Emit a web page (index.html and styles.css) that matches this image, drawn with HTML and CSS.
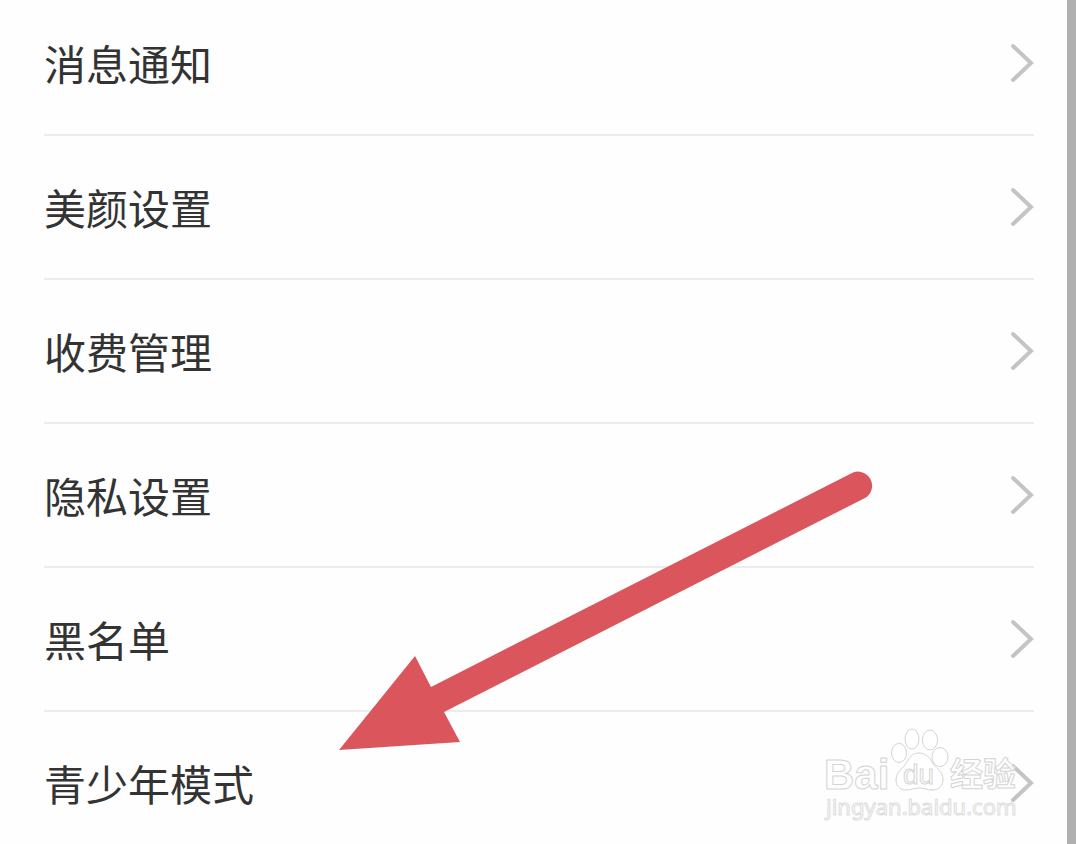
FILE: index.html
```html
<!DOCTYPE html>
<html lang="zh-CN">
<head>
    <meta charset="UTF-8">
    <meta name="viewport" content="width=device-width, initial-scale=1.0">
    <title>设置</title>
    <link rel="stylesheet" href="styles.css">
</head>
<body>
    <main class="page">
        <nav class="settings">
            <a class="row" href="#notice">消息通知
                <svg class="chevron" viewBox="0 0 24 40"><path d="M3 3L21 20L3 37"/></svg>
            </a>
            <a class="row" href="#beauty">美颜设置
                <svg class="chevron" viewBox="0 0 24 40"><path d="M3 3L21 20L3 37"/></svg>
            </a>
            <a class="row" href="#charge">收费管理
                <svg class="chevron" viewBox="0 0 24 40"><path d="M3 3L21 20L3 37"/></svg>
            </a>
            <a class="row" href="#privacy">隐私设置
                <svg class="chevron" viewBox="0 0 24 40"><path d="M3 3L21 20L3 37"/></svg>
            </a>
            <a class="row" href="#blacklist">黑名单
                <svg class="chevron" viewBox="0 0 24 40"><path d="M3 3L21 20L3 37"/></svg>
            </a>
            <a class="row" href="#teen">青少年模式
                <svg class="chevron" viewBox="0 0 24 40"><path d="M3 3L21 20L3 37"/></svg>
            </a>
        </nav>

        <!-- Red arrow pointing at the last row -->
        <svg class="arrow" viewBox="0 0 534 280">
            <path d="M0 279L76 185L92 216L512 2.500A14 14 0 0 1 526 27L105 241L121 271Z"/>
        </svg>

        <!-- Watermark -->
        <svg class="watermark" viewBox="0 0 200 100">
            <text class="brand" x="2" y="63">Bai</text>
            <ellipse cx="77" cy="27" rx="7.5" ry="9.5"/>
            <ellipse cx="90" cy="13" rx="7" ry="10"/>
            <ellipse cx="108" cy="14" rx="7.5" ry="10"/>
            <ellipse cx="118" cy="31" rx="8" ry="9.5"/>
            <path d="M97 27C90 27 87 32 85 36C82 42 74 45 74 54C74 60 78 64 84 64C89 64 92 62 97 62C103 62 105 64 110 64C117 64 121 60 121 53C121 45 113 42 110 36C108 32 104 27 97 27Z"/>
            <text class="du" x="81" y="58">du</text>
            <text class="sub" x="128" y="60">经验</text>
            <text class="site" x="4" y="89">jingyan.baidu.com</text>
        </svg>
    </main>
</body>
</html>
```
FILE: styles.css
```css
body {
    margin: 0;
    background-color: #fefefe;
    font-family: "Noto Sans CJK SC", sans-serif;
    overflow: hidden;
}
.page {
    display: flow-root;
    position: relative;
    box-sizing: border-box;
    min-height: 100vh;
    padding: 0 33px 0 44px;
    border-right: 9px solid #b0b0b0;
}
/* list is scrolled a little past the first row */
.settings {
    display: flex;
    flex-direction: column;
    margin-top: -8px;
}
.row {
    display: flex;
    align-items: center;
    justify-content: space-between;
    box-sizing: border-box;
    height: 144px;
    border-bottom: 2px solid #ececec;
    color: #333;
    font-size: 42px;
    line-height: 60px;
    text-decoration: none;
}
.row:last-child {
    border-bottom-color: transparent;
}
.chevron {
    width: 24px;
    height: 40px;
    fill: none;
    stroke: #c4c4c4;
    stroke-width: 4;
    stroke-linecap: round;
}
.arrow {
    position: absolute;
    left: 339px;
    top: 471px;
    width: 534px;
    height: 280px;
    fill: #db565c;
}
.watermark {
    position: absolute;
    right: 45px;
    top: 726px;
    width: 200px;
    height: 100px;
    overflow: visible;
    fill: #fff;
    fill-opacity: 0.7;
    stroke: #d4d4d4;
    stroke-width: 1;
    stroke-linejoin: round;
}
.brand {
    font: bold 42px "Liberation Sans", sans-serif;
}
.du {
    font: 28px "Liberation Sans", sans-serif;
}
.sub {
    font: bold 33px "Noto Sans CJK SC", sans-serif;
}
.site {
    font: 22px "Noto Sans", sans-serif;
    stroke: #dcdcdc;
}
```
